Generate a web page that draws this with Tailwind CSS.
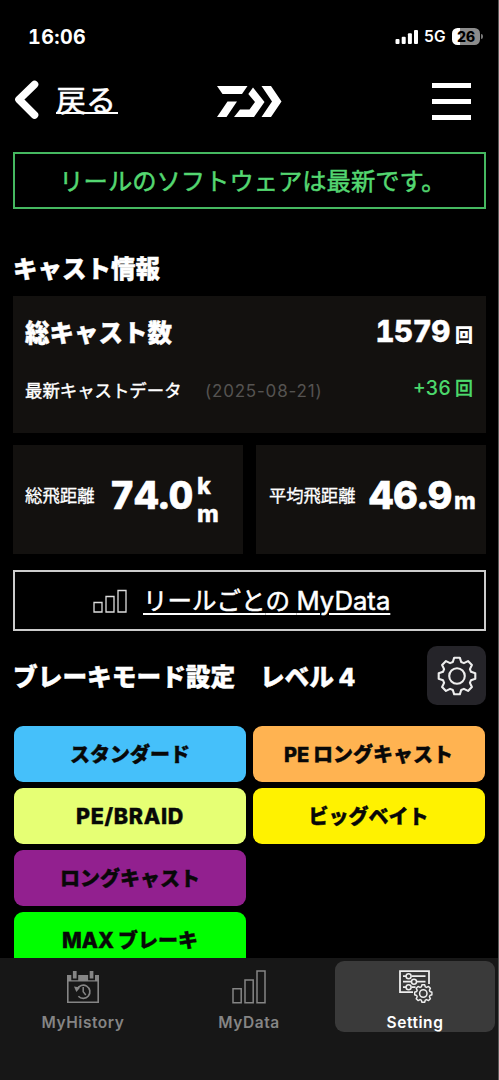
<!DOCTYPE html>
<html lang="ja">
<head>
<meta charset="utf-8">
<title>MyData Setting</title>
<script src="https://cdn.jsdelivr.net/npm/@tailwindcss/browser@4"></script>
</head>
<body class="bg-black text-white tabular-nums font-[Inter,'Noto_Sans_CJK_JP',sans-serif] w-[499px] h-[1080px] overflow-hidden">
<svg class="hidden">
  <symbol id="gear" viewBox="-20 -20 40 40">
    <path fill="none" stroke="currentColor" stroke-linejoin="round" d="M-4.2-14L-2.8-18.3H2.8L4.2-14L6.9-12.9L11-14.9L14.9-11L12.9-6.9L14-4.2L18.3-2.8V2.8L14 4.2L12.9 6.9L14.9 11L11 14.9L6.9 12.9L4.2 14L2.8 18.3H-2.8L-4.2 14L-6.9 12.9L-11 14.9L-14.9 11L-12.9 6.9L-14 4.2L-18.3 2.8V-2.8L-14-4.2L-12.9-6.9L-14.9-11L-11-14.9L-6.9-12.9Z"/>
    <circle r="7.8" fill="none" stroke="currentColor"/>
  </symbol>
</svg>
<div class="w-[499px] h-[1080px] flex flex-col border-r border-[#5a5a5a]">
  <div class="h-[72px] shrink-0 flex justify-between pl-[28px] pr-[15px] pt-[26px]">
    <div class="text-[19.7px] leading-[22px] font-bold tracking-[0.4px] whitespace-nowrap">16:06</div>
    <div class="flex items-center h-[21px]">
      <svg width="24" height="16" viewBox="0 0 24 16" fill="#fff"><rect x=".5" y="10" width="4" height="5" rx="1"/><rect x="6.7" y="7.7" width="4" height="7.3" rx="1"/><rect x="12.9" y="4.3" width="4" height="10.7" rx="1"/><rect x="19" y="1" width="4" height="14" rx="1"/></svg>
      <span class="text-[15.5px] font-semibold ml-[5px] w-[22px]">5G</span>
      <span class="ml-[6px] w-[28px] h-[17px] rounded-[5.5px] bg-linear-to-r from-white from-27% to-[#8c8c8c] to-27% text-black text-[14px] leading-[17px] font-extrabold text-center">26</span>
      <span class="ml-[1px] w-[2px] h-[5px] rounded-r bg-[#777]"></span>
    </div>
  </div>
  <div class="h-[80px] shrink-0 flex">
    <svg class="mt-[7px] ml-[14px]" width="26" height="42" viewBox="0 0 26 42" fill="none" stroke="#fff" stroke-width="7.6" stroke-linecap="round" stroke-linejoin="round"><path d="M20.5 5.5L5 20.5L20.5 36"/></svg>
    <div class="ml-[16px] mt-[8px] w-[62px] h-[34px] text-[30px] leading-[40px] border-b-2 border-white whitespace-nowrap [-webkit-text-stroke:0.6px]">戻る</div>
    <svg class="ml-[92px] mt-[4px]" width="80" height="50" viewBox="0 0 80 50" fill="#fff"><path d="M7 10H37.5L32 18H12.5ZM17.5 25.5H27L16.5 41H7ZM43 11.5L54.5 26L44 41H24L30 33.5H39.5L45 26L38.3 18ZM51.5 10H61L71.5 25.5L61 41H51.5L62 25.5Z"/></svg>
    <div class="ml-[142px] mt-[11px] w-[39px] flex flex-col gap-[11px]"><i class="h-[5px] bg-white"></i><i class="h-[5px] bg-white"></i><i class="h-[5px] bg-white"></i></div>
  </div>
  <main class="h-[806px] shrink-0 overflow-hidden pl-[13px] pr-3">
    <div class="w-[473px] h-[57px] border-2 border-[#45b860] text-[#54d771] text-[24.3px] leading-[55px] text-center pl-[6px] whitespace-nowrap [-webkit-text-stroke:0.5px]">リールのソフトウェアは最新です。</div>
    <h2 class="mt-[43px] h-[44px] text-[24.5px] leading-[34px] font-extrabold [-webkit-text-stroke:0.4px]">キャスト情報</h2>
    <section class="w-[473px] h-[137px] bg-[#13110f] pl-3 pr-[13px]">
      <div class="flex justify-between items-baseline pt-[15px] h-[72px] leading-[40px]">
        <span class="text-[24.5px] font-extrabold [-webkit-text-stroke:0.4px]">総キャスト数</span>
        <span class="text-[29.5px] tracking-[-0.4px] font-extrabold whitespace-nowrap [-webkit-text-stroke:0.4px]">1579<span class="text-[18px] ml-[5px] tracking-normal [-webkit-text-stroke:0px]">回</span></span>
      </div>
      <div class="flex h-[45px] leading-[46px]">
        <span class="text-[17.4px] w-[180px] whitespace-nowrap [-webkit-text-stroke:0.4px]">最新キャストデータ</span>
        <span class="text-[17px] proportional-nums tracking-[0.8px] text-[#555351] whitespace-nowrap">(2025-08-21)</span>
        <span class="ml-auto -mt-[3px] text-[19.5px] font-medium text-[#4cd96c] whitespace-nowrap">+36<span class="text-[18px] ml-[4px] [-webkit-text-stroke:0.3px]">回</span></span>
      </div>
    </section>
    <div class="w-[473px] mt-3 grid grid-cols-[230px_230px] gap-[13px]">
      <section class="h-[109px] bg-[#13110f] pl-3 flex items-start">
        <span class="text-[17.4px] leading-[26px] mt-[38px] w-[85px] whitespace-nowrap [-webkit-text-stroke:0.3px]">総飛距離</span>
        <span class="text-[37.7px] leading-[44px] font-extrabold mt-[28px] whitespace-nowrap [-webkit-text-stroke:0.7px]">74.0</span>
        <span class="text-[23.5px] leading-[27.5px] font-extrabold mt-[27px] ml-[4px] [-webkit-text-stroke:0.3px]">k<br>m</span>
      </section>
      <section class="h-[109px] bg-[#13110f] pl-[13px] flex items-start">
        <span class="text-[17.3px] leading-[26px] mt-[38px] w-[100px] whitespace-nowrap [-webkit-text-stroke:0.3px]">平均飛距離</span>
        <span class="text-[37.7px] leading-[44px] font-extrabold mt-[28px] whitespace-nowrap [-webkit-text-stroke:0.7px]">46.9<span class="text-[23.5px] ml-[2px] [-webkit-text-stroke:0.3px]">m</span></span>
      </section>
    </div>
    <a class="w-[473px] h-[61px] mt-[16px] border-2 border-[#ccc] flex">
      <svg class="ml-[78px] mt-[16px]" width="36" height="26" viewBox="0 0 36 26" fill="none" stroke="#ddd" stroke-width="1.3"><path d="M1 14.5H9V24H1ZM13 8.5H21V24H13ZM25 2.5H33V24H25Z"/></svg>
      <span class="ml-[14px] mt-[8px] text-[24.5px] leading-[42px] underline decoration-2 underline-offset-[3px] whitespace-nowrap [-webkit-text-stroke:0.5px]">リールごと<span class="tracking-[6.5px]">の</span><span class="text-[25.7px]">MyData</span></span>
    </a>
    <div class="w-[473px] h-[59px] mt-[15px] flex items-center">
      <h2 class="text-[24.7px] leading-[40px] pt-[2px] font-extrabold whitespace-nowrap [-webkit-text-stroke:0.4px]">ブレーキモード設定　レベル<span class="ml-[5px]">4</span></h2>
      <button class="ml-auto w-[59px] h-[59px] rounded-[10px] bg-[#252429] flex items-center justify-center"><svg class="text-[#eee]" width="40" height="40" stroke-width="2.1"><use href="#gear"/></svg></button>
    </div>
    <div class="mt-[20.6px] ml-[1px] grid grid-cols-[232px_232px] auto-rows-[56px] gap-x-[6.5px] gap-y-[6.2px] text-[20px] font-extrabold text-[#080808] text-center leading-[58px] whitespace-nowrap [-webkit-text-stroke:0.4px] *:rounded-[9px]">
      <div class="bg-[#45c0fa]">スタンダード</div>
      <div class="bg-[#ffb351]">PE<span class="ml-[4px]">ロングキャスト</span></div>
      <div class="bg-[#e6ff74] text-[21.5px] tracking-[0.7px] leading-[57px]">PE/BRAID</div>
      <div class="bg-[#fff200]">ビッグベイト</div>
      <div class="bg-[#92208f] col-start-1">ロングキャスト</div>
      <div class="bg-[#00ff00] col-start-1"><span class="text-[21px]">MAX</span><span class="ml-[4px]">ブレーキ</span></div>
    </div>
  </main>
  <nav class="h-[122px] shrink-0 bg-[#171717] pl-[3px] pr-[3px] pt-[3px] grid grid-cols-[160px_160px_160px] gap-x-[6px] items-start text-[15.5px] font-semibold leading-[20px] tracking-[0.55px] text-[#858585]">
    <div class="h-[71px] flex flex-col items-center *:shrink-0">
      <svg class="mt-[8px]" width="34" height="36" viewBox="0 0 34 36" fill="none" stroke="currentColor"><path d="M1.8 7V33.2H32.2V7" stroke-width="1.6"/><path d="M1 6H5.3V11.2H12.2V6H22.1V11.2H29V6H33V12.5H1Z" fill="currentColor" stroke="none"/><path d="M6.9 2H10.6V9.6H6.9ZM23.7 2H27.4V9.6H23.7Z" fill="currentColor" stroke="none"/><path d="M11.2 20.2A6.6 6.6 0 1 1 12.4 27.2" stroke-width="1.7"/><path d="M8 17.5L14.2 18.5L10.4 23Z" fill="currentColor" stroke="none"/><path d="M17.2 18V22.8L19.8 26" stroke-width="1.5"/></svg>
      <span class="mt-[8px]">MyHistory</span>
    </div>
    <div class="h-[71px] flex flex-col items-center *:shrink-0">
      <svg class="mt-[9px]" width="36" height="36" viewBox="0 0 36 36" fill="none" stroke="currentColor" stroke-width="1.5"><path d="M2 18.8H10.2V32.8H2ZM14 10H22.2V32.8H14ZM26 1H34V32.8H26Z"/></svg>
      <span class="mt-[7px]">MyData</span>
    </div>
    <div class="h-[71px] flex flex-col items-center rounded-[9px] bg-[#3a3a3a] text-white *:shrink-0">
      <svg class="mt-[8px] text-[#eee]" width="36" height="36" viewBox="0 0 36 36" fill="none" stroke="currentColor" stroke-width="1.5"><path d="M16 23.2H3V2.2H32V15" stroke-width="1.8"/><path d="M6 7.2H9M14.5 7.2H28.5M6 12.7H14.5M20 12.7H28.5M6 18.2H9M14.5 18.2H18.5" stroke-width="1.7"/><circle cx="11.6" cy="7.2" r="2.5"/><circle cx="17" cy="12.7" r="2.5"/><circle cx="11.6" cy="18.2" r="2.5"/><use href="#gear" x="16.8" y="15" width="19" height="19" stroke-width="3.2"/></svg>
      <span class="mt-[8px]">Setting</span>
    </div>
  </nav>
</div>
</body>
</html>
